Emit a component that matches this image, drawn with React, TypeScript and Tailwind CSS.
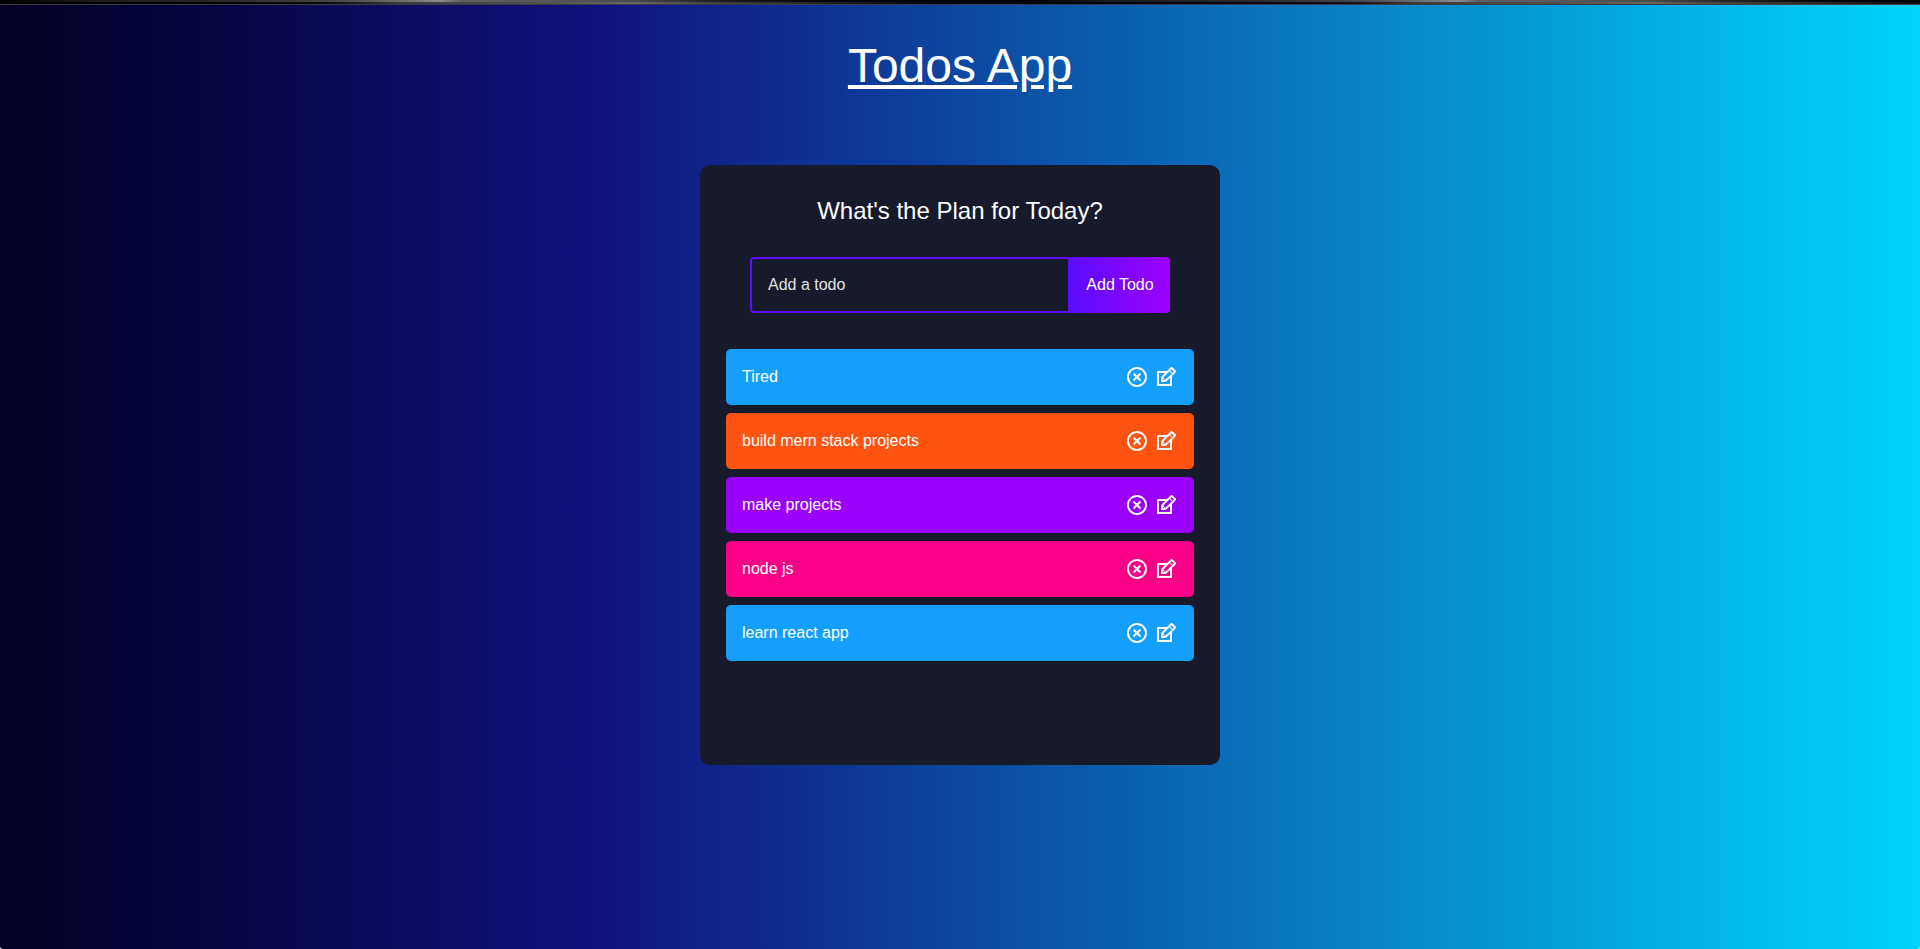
import { useState, type FormEvent } from 'react';
import { RiCloseCircleLine } from 'react-icons/ri';
import { TiEdit } from 'react-icons/ti';

type Todo = { id: number; text: string };

const initialTodos: Todo[] = [
  { id: 1, text: 'Tired' },
  { id: 2, text: 'build mern stack projects' },
  { id: 3, text: 'make projects' },
  { id: 4, text: 'node js' },
  { id: 5, text: 'learn react app' },
];

const rowColors = ['bg-[#149fff]', 'bg-[#ff5411]', 'bg-[#9b00fa]', 'bg-[#fa0087]'];

function TopEdge() {
  return (
    <div className="flex h-[5px] flex-col border-b border-[#3c3c3c]">
      <div className="flex-1 bg-[repeating-linear-gradient(90deg,#000_0%,#1c1c1c_5%,#2a2a2a_12%,#4a4a4a_18%,#8a8a8a_23%,#606060_24%,#585858_28%,#4a4a4a_33%,#222_37%,#060606_42%,#000_53%)]" />
      <div className="flex-1 bg-[repeating-linear-gradient(90deg,#000_0%,#000_10%,#0c0c0c_17%,#3c3c3c_21%,#505050_28%,#666_33%,#444_37%,#2e2e2e_41%,#101010_46%,#000_50%,#000_53%)]" />
    </div>
  );
}

function TodoForm({ onAdd }: { onAdd: (text: string) => void }) {
  const [text, setText] = useState('');

  const submit = (e: FormEvent) => {
    e.preventDefault();
    if (!text.trim()) return;
    onAdd(text.trim());
    setText('');
  };

  return (
    <form onSubmit={submit} className="mx-auto flex h-14 w-full max-w-[420px]">
      <input
        aria-label="Add a todo"
        placeholder="Add a todo"
        value={text}
        onChange={(e) => setText(e.target.value)}
        className="min-w-0 flex-1 rounded-l border-2 border-[#5d0cff] bg-transparent px-4 text-white outline-none placeholder:text-[#e2e2e2]"
      />
      <button
        type="submit"
        className="w-[100px] shrink-0 cursor-pointer rounded-r bg-[linear-gradient(90deg,#5d0cff_0%,#9b00fa_100%)] text-white"
      >
        Add Todo
      </button>
    </form>
  );
}

export default function App() {
  const [todos, setTodos] = useState(initialTodos);

  const add = (text: string) => setTodos([{ id: Date.now(), text }, ...todos]);
  const remove = (id: number) => setTodos(todos.filter((t) => t.id !== id));
  const edit = (todo: Todo) => {
    const text = window.prompt('Update your item', todo.text);
    if (text) setTodos(todos.map((t) => (t.id === todo.id ? { ...t, text } : t)));
  };

  return (
    <div className="flex min-h-screen flex-col rounded-b-[3px] bg-[linear-gradient(90deg,#020024_0%,#11117d_31%,#00d4ff_100%)] font-['Liberation_Sans',Arial,sans-serif] text-base">
      <TopEdge />
      <h1 className="mt-8 text-center text-5xl leading-[58px] text-white underline">Todos App</h1>
      <main className="mx-auto mt-[70px] mb-8 min-h-[600px] w-full max-w-[520px] rounded-[10px] bg-[#161a2b] pb-8 text-center">
        <h2 className="my-8 text-2xl leading-7 text-white">What's the Plan for Today?</h2>
        <TodoForm onAdd={add} />
        <ul className="mx-auto mt-9 flex w-9/10 flex-col gap-2">
          {todos.map((todo, i) => (
            <li
              key={todo.id}
              className={`flex h-14 items-center justify-between rounded-[5px] px-4 text-white ${rowColors[i % rowColors.length]}`}
            >
              <span>{todo.text}</span>
              <div className="flex items-center gap-[5px] text-2xl">
                <button type="button" aria-label="Delete" className="cursor-pointer" onClick={() => remove(todo.id)}>
                  <RiCloseCircleLine />
                </button>
                <button type="button" aria-label="Edit" className="cursor-pointer" onClick={() => edit(todo)}>
                  <TiEdit />
                </button>
              </div>
            </li>
          ))}
        </ul>
      </main>
    </div>
  );
}
